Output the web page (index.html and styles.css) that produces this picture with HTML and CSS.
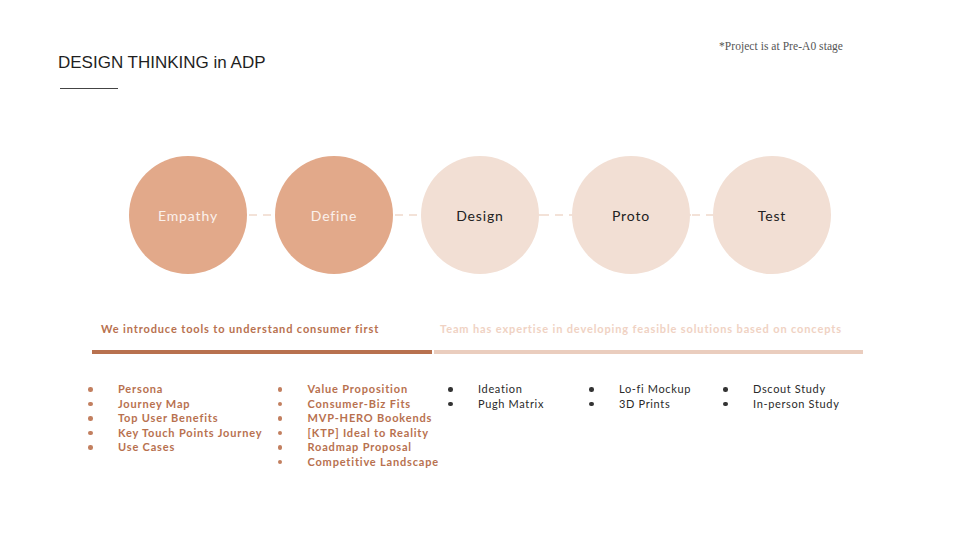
FILE: index.html
```html
<!DOCTYPE html>
<html lang="en">
<head>
<meta charset="utf-8">
<title>Design Thinking in ADP</title>
<link rel="stylesheet" href="styles.css">
</head>
<body>
<div class="slide">
  <header class="header">
    <h1 class="title">DESIGN THINKING in ADP</h1>
    <p class="note">*Project is at Pre-A0 stage</p>
  </header>
  <div class="rule"></div>

  <div class="stages">
    <div class="circle circle-dark">Empathy</div>
    <div class="dash dash-a"></div>
    <div class="circle circle-dark">Define</div>
    <div class="dash dash-b"></div>
    <div class="circle circle-light">Design</div>
    <div class="dash dash-c"></div>
    <div class="circle circle-light">Proto</div>
    <div class="dash dash-d"></div>
    <div class="circle circle-light">Test</div>
  </div>

  <div class="phases">
    <div class="phase phase-dark">
      <p class="phase-text">We introduce tools to understand consumer first</p>
      <div class="bar"></div>
    </div>
    <div class="phase phase-light">
      <p class="phase-text">Team has expertise in developing feasible solutions based on concepts</p>
      <div class="bar"></div>
    </div>
  </div>

  <div class="lists">
    <ul class="list list-accent">
      <li>Persona</li>
      <li>Journey Map</li>
      <li>Top User Benefits</li>
      <li>Key Touch Points Journey</li>
      <li>Use Cases</li>
    </ul>
    <ul class="list list-accent">
      <li>Value Proposition</li>
      <li>Consumer-Biz Fits</li>
      <li>MVP-HERO Bookends</li>
      <li>[KTP] Ideal to Reality</li>
      <li>Roadmap Proposal</li>
      <li>Competitive Landscape</li>
    </ul>
    <ul class="list list-plain">
      <li>Ideation</li>
      <li>Pugh Matrix</li>
    </ul>
    <ul class="list list-plain">
      <li>Lo-fi Mockup</li>
      <li>3D Prints</li>
    </ul>
    <ul class="list list-plain">
      <li>Dscout Study</li>
      <li>In-person Study</li>
    </ul>
  </div>
</div>
</body>
</html>
```

FILE: styles.css
```css
* { box-sizing: border-box; }

html, body {
  margin: 0;
  padding: 0;
  background: #ffffff;
}

.slide {
  width: 960px;
  height: 540px;
  overflow: hidden;
  background: #ffffff;
  font-family: "Lato", "Open Sans", sans-serif;
}

.header {
  display: flex;
  justify-content: space-between;
  align-items: flex-start;
  padding: 36px 117px 0 58px;
}

.title {
  margin: 17px 0 0 0;
  font-family: "Liberation Sans", Arial, sans-serif;
  font-weight: 400;
  font-size: 17px;
  line-height: 20px;
  color: #1f1f1f;
}

.note {
  margin: 0;
  font-family: "Liberation Serif", "Times New Roman", serif;
  font-size: 11.5px;
  line-height: 20px;
  letter-spacing: 0.05px;
  color: #555555;
}

.rule {
  margin: 15px 0 0 60px;
  width: 58px;
  height: 1px;
  background: #444444;
}

.stages {
  display: flex;
  align-items: center;
  margin-top: 67px;
  padding-left: 129px;
}

.circle {
  flex: none;
  width: 118px;
  height: 118px;
  border-radius: 50%;
  display: flex;
  align-items: center;
  justify-content: center;
  font-size: 14px;
  letter-spacing: 0.85px;
}

.circle-dark {
  background: #e2a98a;
  color: #fbf1ec;
}

.circle-light {
  background: #f2dfd4;
  color: #222222;
}

.dash {
  flex: none;
  height: 2px;
  background: repeating-linear-gradient(90deg, #f3e2d8 0 8px, transparent 8px 14px);
  background-position: 2px 0;
}

.dash-a { width: 28px; }
.dash-b { width: 28px; }
.dash-c { width: 33px; }
.dash-d { width: 23px; }

.phases {
  display: grid;
  grid-template-columns: 340px 429px;
  column-gap: 2px;
  margin-top: 48px;
  padding-left: 92px;
}

.phase-text {
  margin: 0;
  font-size: 11px;
  line-height: 14px;
  font-weight: 700;
  letter-spacing: 0.87px;
  white-space: nowrap;
}

.phase-dark .phase-text {
  padding-left: 9px;
  color: #b8714f;
}

.phase-light .phase-text {
  padding-left: 6px;
  color: #f0d2c3;
}

.bar {
  margin-top: 14px;
  height: 4px;
}

.phase-dark .bar { background: #b8714f; }
.phase-light .bar { background: #eacdbe; }

.lists {
  display: grid;
  grid-template-columns: 189.5px 170.5px 141px 134px auto;
  margin-top: 28px;
  padding-left: 88px;
}

.list {
  list-style: none;
  margin: 0;
  padding: 0;
  font-size: 11px;
  line-height: 14.5px;
  white-space: nowrap;
}

.list li {
  display: flex;
  align-items: center;
}

.list li::before {
  content: "";
  flex: none;
  width: 4.5px;
  height: 4.5px;
  border-radius: 50%;
  margin-right: 25.5px;
}

.list-accent {
  font-weight: 700;
  letter-spacing: 0.82px;
  color: #b8714f;
}

.list-accent li::before { background: #c27f5f; }

.list-plain {
  font-weight: 400;
  letter-spacing: 0.65px;
  color: #2a2a2a;
}

.list-plain li::before { background: #333333; }
```
